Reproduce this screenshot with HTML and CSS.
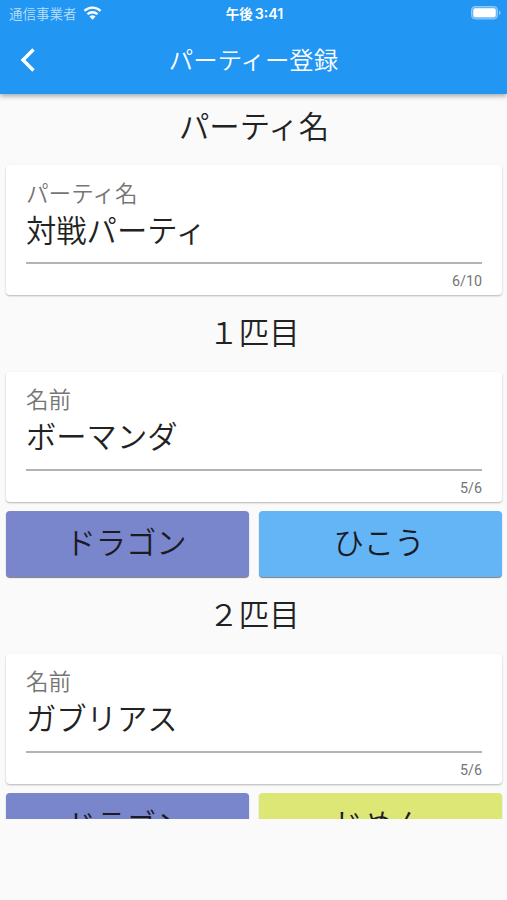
FILE: index.html
```html
<!DOCTYPE html>
<html lang="ja">
<head>
<meta charset="utf-8">
<title>パーティー登録</title>
<link rel="stylesheet" href="styles.css">
</head>
<body>
<header class="appbar">
  <div class="status">
    <div class="carrier"><span>通信事業者</span>
      <svg class="wifi" viewBox="0 0 20 14"><path d="M10 14 6.800 10.800a4.600 4.600 0 0 1 6.400 0z"/><path d="M4.700 8.300a7.600 7.600 0 0 1 10.600 0M1.500 4.800a12.200 12.200 0 0 1 17 0" class="arc"/></svg>
    </div>
    <div class="time">午後<span>3:41</span></div>
    <svg class="battery" viewBox="0 0 30 14"><rect class="shell" x=".5" y=".5" width="26" height="12.500" rx="3.500"/><rect class="fill" x="2.300" y="2.300" width="22.400" height="9" rx="2"/><path class="cap" d="M28 4.700c2 .5 2 3.500 0 4z"/></svg>
  </div>
  <div class="nav">
    <svg class="back" viewBox="0 0 16 26"><path d="M13.500 2.500 3 13l10.500 10.500"/></svg>
    <h1>パーティー登録</h1>
  </div>
</header>
<main class="content">
  <h2 class="first">パーティ名</h2>
  <section class="card"><label>パーティ名</label><div class="value">対戦パーティ</div><div class="count">6/10</div></section>
  <h2>１匹目</h2>
  <section class="card"><label>名前</label><div class="value">ボーマンダ</div><div class="count">5/6</div></section>
  <div class="types"><button class="dragon">ドラゴン</button><button class="flying">ひこう</button></div>
  <h2>２匹目</h2>
  <section class="card"><label>名前</label><div class="value">ガブリアス</div><div class="count">5/6</div></section>
  <div class="types"><button class="dragon">ドラゴン</button><button class="ground">じめん</button></div>
</main>
</body>
</html>
```
FILE: styles.css
```css
* { box-sizing: border-box; }
body { margin: 0; height: 900px; overflow: hidden; background: #fafafa; color: #222; font-family: "Noto Sans CJK JP", sans-serif; font-weight: 350; }
.appbar { position: relative; height: 94px; background: #2196f3; color: #fff; box-shadow: 0 2px 5px rgba(0,0,0,.35); }
.status { display: grid; grid-template-columns: 1fr auto 1fr; align-items: center; height: 27px; padding: 0 6px 0 9px; }
.carrier { display: flex; align-items: center; gap: 6px; font-size: 13.5px; line-height: 20px; color: #b9dffb; }
.carrier span { margin-top: -1px; }
.wifi { width: 19px; height: 14px; margin-top: -1px; fill: #fff; }
.arc { fill: none; stroke: #fff; stroke-width: 2.5; }
.time { font: 700 13.5px/20px Inter, "Noto Sans CJK JP", sans-serif; margin-right: 1px; }
.time span { margin-left: 2px; font-weight: 600; font-size: 14.2px; }
.battery { justify-self: end; width: 30px; height: 14px; margin-top: -1px; }
.shell { fill: #64b5f6; stroke: #90caf9; }
.fill { fill: #fff; }
.cap { fill: #90caf9; }
.nav { display: grid; grid-template-columns: 60px 1fr 60px; align-items: center; height: 66px; }
.back { width: 16px; height: 26px; margin-left: 20px; fill: none; stroke: #fff; stroke-width: 3.4; }
h1 { margin: 0 0 2px; text-align: center; font-size: 24.4px; font-weight: 350; line-height: 36px; white-space: nowrap; }
.content { height: 725px; padding: 0 5px 0 6px; overflow: hidden; }
h2 { margin: 0; height: 76.5px; padding-top: 14px; text-align: center; font-size: 30.4px; line-height: 44px; font-weight: 350; }
h2.first { height: 71px; padding-top: 9px; }
.card { height: 130px; padding: 13.5px 20px 0; background: #fff; border-radius: 4px; box-shadow: 0 1px 2px rgba(0,0,0,.28); }
label { display: block; height: 28px; font-size: 22.6px; line-height: 28px; color: #757575; }
.value { height: 57.5px; border-bottom: 2px solid #b3b3b3; font-size: 30.3px; line-height: 44px; }
.count { padding-top: 8px; text-align: right; font: 400 14.3px/18px Roboto, sans-serif; color: #757575; }
.types { display: grid; grid-template-columns: 1fr 1fr; gap: 10px; padding-top: 9.5px; }
button { height: 66px; padding: 0 3px 6px 0; border: 0; border-radius: 4px; color: #1b1b25; font: 350 30.3px/60px "Noto Sans CJK JP", sans-serif; box-shadow: 0 1px 1px rgba(0,0,0,.5); }
.dragon { background: #7986cb; }
.flying { background: #64b5f6; }
.ground { background: #dce775; }
```
